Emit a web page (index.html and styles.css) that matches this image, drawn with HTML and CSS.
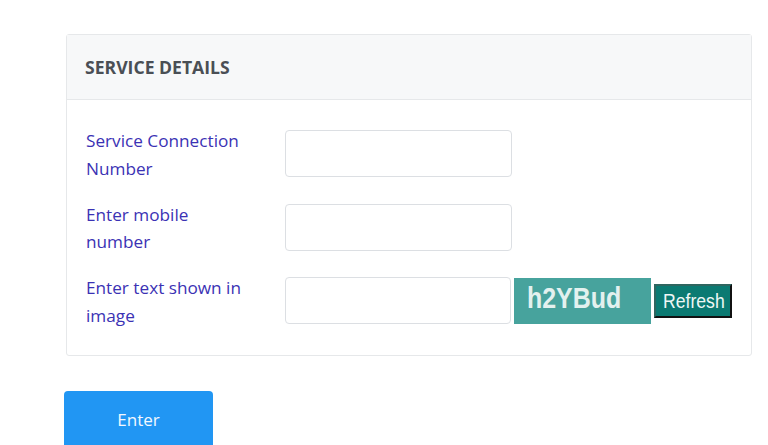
FILE: index.html
```html
<!DOCTYPE html>
<html>
<head>
<meta charset="utf-8">
<link rel="stylesheet" href="styles.css">
</head>
<body>
<div class="page">
  <div class="card">
    <div class="card-header">SERVICE DETAILS</div>
    <div class="card-body">
      <div class="row">
        <label class="label">Service Connection Number</label>
        <input class="field" type="text">
      </div>
      <div class="row">
        <label class="label">Enter mobile number</label>
        <input class="field" type="text">
      </div>
      <div class="row">
        <label class="label">Enter text shown in image</label>
        <input class="field" type="text">
        <div class="captcha"><span class="narrow">h2YBud</span></div>
        <button class="refresh"><span class="narrow">Refresh</span></button>
      </div>
    </div>
  </div>
  <button class="enter">Enter</button>
</div>
</body>
</html>
```

FILE: styles.css
```css
html, body {
  margin: 0;
  padding: 0;
  background: #fff;
  font-family: "Open Sans", "Noto Sans", sans-serif;
}
.page {
  padding: 34px 16px 0 64px;
}
.card {
  width: 686px;
  margin-left: 2px;
  border: 1px solid #e6e8ea;
  border-radius: 3px;
  box-sizing: border-box;
}
.card-header {
  height: 65px;
  box-sizing: border-box;
  background: #f7f8f9;
  border-bottom: 1px solid #e6e8ea;
  display: flex;
  align-items: center;
  padding-left: 18px;
  font-size: 17.6px;
  font-weight: 700;
  color: #4a4f55;
}
.card-body {
  padding: 30px 19px 31px 19px;
  display: flex;
  flex-direction: column;
  gap: 26.5px;
}
.row {
  display: flex;
  align-items: flex-start;
  height: 47px;
}
.label {
  width: 199px;
  font-size: 17.2px;
  line-height: 27.5px;
  color: #3b32b4;
  margin-top: -3px;
  padding-right: 36px;
  box-sizing: border-box;
}
.field {
  width: 227px;
  height: 47px;
  box-sizing: border-box;
  border: 1px solid #dcdfe3;
  border-radius: 4px;
  margin: 0;
  padding: 0;
}
.narrow {
  display: inline-block;
  transform: scaleX(0.86);
  transform-origin: left center;
}
.captcha {
  width: 137px;
  height: 46px;
  margin-left: 3px;
  margin-top: 1px;
  background: #47a39d;
  color: #e3f1ef;
  font-family: "Liberation Sans", sans-serif;
  font-weight: 700;
  font-size: 29px;
  line-height: 40px;
  padding-left: 13px;
  box-sizing: border-box;
}
.refresh {
  margin: 7px 0 0 3px;
  width: 78px;
  height: 34px;
  background: #0b7a72;
  color: #eef7f5;
  border: 2px solid #111;
  border-left-color: #2f6660;
  border-top-color: #2f6660;
  font-family: "Liberation Sans", sans-serif;
  font-size: 20.5px;
  padding: 0 0 0 7px;
  text-align: left;
}
.enter {
  margin-top: 35px;
  width: 149px;
  height: 58px;
  border: none;
  border-radius: 4px;
  background: #2196f3;
  color: #f2f8ff;
  font-family: "Open Sans", "Noto Sans", sans-serif;
  font-size: 17px;
  padding: 0 0 2px 0;
}
```
